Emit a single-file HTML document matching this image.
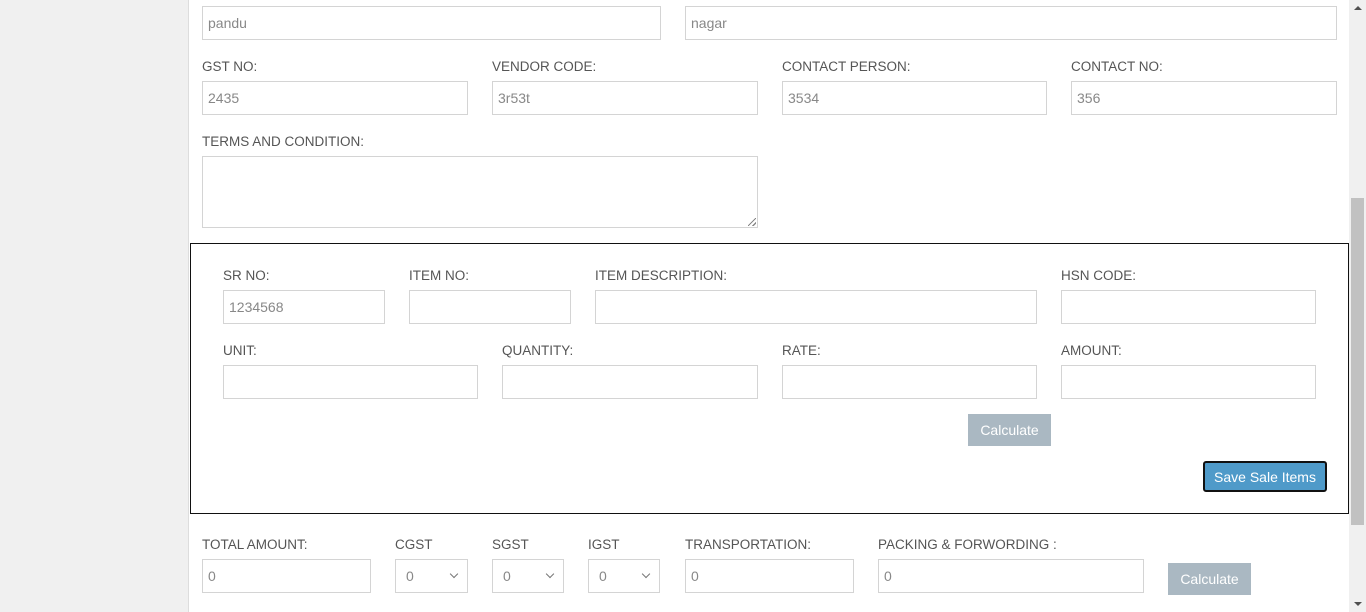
<!DOCTYPE html>
<html><head><meta charset="utf-8"><style>
*{box-sizing:border-box;margin:0;padding:0}
body{width:1366px;height:612px;overflow:hidden;background:#fff;font-family:"Liberation Sans",sans-serif;font-size:13.5px;color:#555;position:relative}
.side{position:absolute;left:0;top:0;width:189px;height:612px;background:#f0f0f0;border-right:1px solid #ddd}
.i{position:absolute;height:34px;border:1px solid #d4d4d4;background:#fff;padding:0 5px;line-height:32px;color:#888;font-size:14px}
.l{position:absolute;font-size:13.5px;color:#555;line-height:16px;margin-top:1px}
.btn{position:absolute;background:#aab8c2;color:#fff;font-size:14px;text-align:center;line-height:32px;height:32px}
.sel:after{content:"";position:absolute;right:10px;top:11px;width:5px;height:5px;border-right:1.5px solid #777;border-bottom:1.5px solid #777;transform:rotate(45deg)}
.box{position:absolute;left:190px;top:243px;width:1159px;height:271px;border:1px solid #111}
.sb{position:absolute;left:1349px;top:0;width:17px;height:612px;background:#f0f0f0}
.th{position:absolute;left:1351px;top:198px;width:13px;height:327px;background:#c1c1c1}
</style></head><body>
<div class="side"></div>
<div class="i" style="left:202px;top:6px;width:459px">pandu</div>
<div class="i" style="left:685px;top:6px;width:652px">nagar</div>
<div class="l" style="left:202px;top:58px">GST NO:</div>
<div class="l" style="left:492px;top:58px">VENDOR CODE:</div>
<div class="l" style="left:782px;top:58px">CONTACT PERSON:</div>
<div class="l" style="left:1071px;top:58px">CONTACT NO:</div>
<div class="i" style="left:202px;top:81px;width:266px">2435</div>
<div class="i" style="left:492px;top:81px;width:266px">3r53t</div>
<div class="i" style="left:782px;top:81px;width:265px">3534</div>
<div class="i" style="left:1071px;top:81px;width:266px">356</div>
<div class="l" style="left:202px;top:133px">TERMS AND CONDITION:</div>
<div class="i" style="left:202px;top:156px;width:556px;height:72px"></div>
<div style="position:absolute;left:748px;top:218px;width:8px;height:8px;background:linear-gradient(135deg,transparent 45%,#888 45%,#888 55%,transparent 55%,transparent 75%,#888 75%,#888 85%,transparent 85%)"></div>
<div class="box"></div>
<div class="l" style="left:223px;top:267px">SR NO:</div>
<div class="l" style="left:409px;top:267px">ITEM NO:</div>
<div class="l" style="left:595px;top:267px">ITEM DESCRIPTION:</div>
<div class="l" style="left:1061px;top:267px">HSN CODE:</div>
<div class="i" style="left:223px;top:290px;width:162px">1234568</div>
<div class="i" style="left:409px;top:290px;width:162px"></div>
<div class="i" style="left:595px;top:290px;width:442px"></div>
<div class="i" style="left:1061px;top:290px;width:255px"></div>
<div class="l" style="left:223px;top:342px">UNIT:</div>
<div class="l" style="left:502px;top:342px">QUANTITY:</div>
<div class="l" style="left:782px;top:342px">RATE:</div>
<div class="l" style="left:1061px;top:342px">AMOUNT:</div>
<div class="i" style="left:223px;top:365px;width:255px"></div>
<div class="i" style="left:502px;top:365px;width:256px"></div>
<div class="i" style="left:782px;top:365px;width:255px"></div>
<div class="i" style="left:1061px;top:365px;width:255px"></div>
<div class="btn" style="left:968px;top:414px;width:83px">Calculate</div>
<div style="position:absolute;left:1203px;top:461px;width:124px;height:31px;background:#4f9ac9;border:2px solid #111;border-radius:3px;color:#fff;font-size:14px;text-align:center;line-height:28px">Save Sale Items</div>
<div class="l" style="left:202px;top:536px">TOTAL AMOUNT:</div>
<div class="l" style="left:395px;top:536px">CGST</div>
<div class="l" style="left:492px;top:536px">SGST</div>
<div class="l" style="left:588px;top:536px">IGST</div>
<div class="l" style="left:685px;top:536px">TRANSPORTATION:</div>
<div class="l" style="left:878px;top:536px">PACKING &amp; FORWORDING :</div>
<div class="i" style="left:202px;top:559px;width:169px">0</div>
<div class="i sel" style="left:395px;top:559px;width:73px;padding-left:10px">0</div>
<div class="i sel" style="left:492px;top:559px;width:72px;padding-left:10px">0</div>
<div class="i sel" style="left:588px;top:559px;width:72px;padding-left:10px">0</div>
<div class="i" style="left:685px;top:559px;width:169px">0</div>
<div class="i" style="left:878px;top:559px;width:266px">0</div>
<div class="btn" style="left:1168px;top:563px;width:83px">Calculate</div>
<div class="sb"></div><div class="th"></div>
<div style="position:absolute;left:1354px;top:6px;border-left:4px solid transparent;border-right:4px solid transparent;border-bottom:4px solid #505050"></div>
<div style="position:absolute;left:1354px;top:602px;border-left:4px solid transparent;border-right:4px solid transparent;border-top:4px solid #505050"></div>
</body></html>
